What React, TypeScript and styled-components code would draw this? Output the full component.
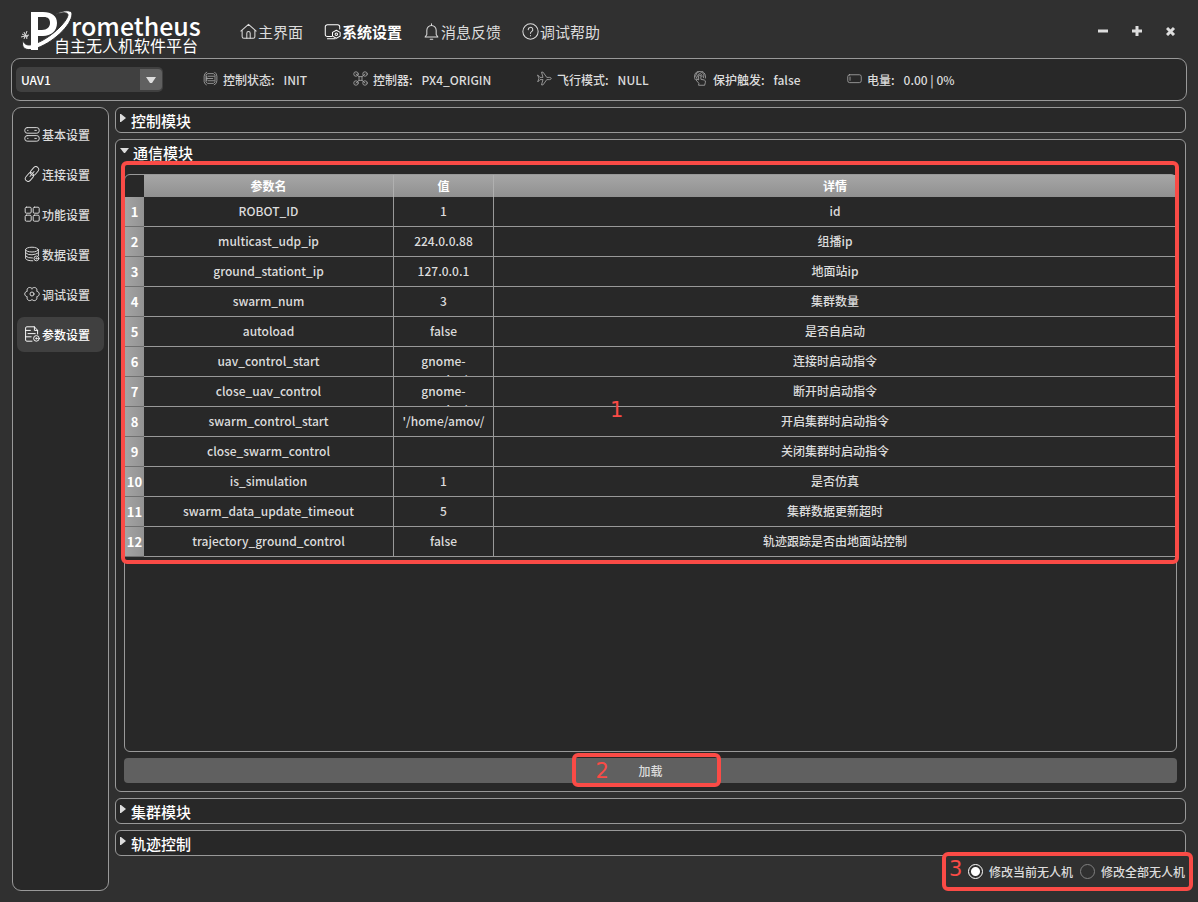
import React, { useState } from "react";
import styled, { createGlobalStyle } from "styled-components";

const line = "#999999";
const panel = "#282828";
const red = "#fa4b46";

const GlobalStyle = createGlobalStyle`
  * { box-sizing: border-box; }
  body {
    margin: 0;
    background: #303030;
    color: #dcdcdc;
    font-family: "Noto Sans CJK SC", "Noto Sans", sans-serif;
    font-size: 12px;
    font-weight: 500;
  }
  button, select, input { font: inherit; color: inherit; }
`;

const Page = styled.div`
  min-height: 100vh;
  display: flex;
  flex-direction: column;
`;

const Header = styled.header`
  height: 58px;
  display: flex;
  align-items: center;
  padding: 6px 15px 0 20px;
`;

const Logo = styled.svg`
  width: 184px;
  height: 48px;
  margin-right: 36px;
  flex: none;
`;

const Nav = styled.nav`
  display: flex;
  gap: 21px;
  flex: 1;
`;

const NavLink = styled.a<{ $active?: boolean }>`
  display: flex;
  align-items: center;
  gap: 1px;
  font-size: 15px;
  line-height: 20px;
  font-weight: ${(p) => (p.$active ? 700 : 400)};
  color: ${(p) => (p.$active ? "#ffffff" : "#dcdcdc")};
  text-decoration: none;

  svg { margin-bottom: 2px; }
`;

const Icon = styled.svg<{ $size: number }>`
  width: ${(p) => p.$size}px;
  height: ${(p) => p.$size}px;
  flex: none;
  fill: none;
  stroke: currentColor;
  stroke-linecap: round;
  stroke-linejoin: round;
`;

const WindowButtons = styled.div`
  display: flex;
  gap: 10px;
  padding-bottom: 2px;
`;

const WindowButton = styled.button`
  width: 24px;
  height: 24px;
  padding: 0;
  border: 0;
  background: none;
  display: grid;
  place-items: center;
`;

const StatusBar = styled.section`
  height: 43px;
  margin: 0 11px;
  padding: 0 4px;
  display: flex;
  align-items: center;
  background: ${panel};
  border: 1px solid ${line};
  border-radius: 9px;
`;

const SelectBox = styled.div`
  position: relative;
  width: 147px;
  height: 25px;
  margin-right: 40px;
  flex: none;
`;

const Select = styled.select`
  appearance: none;
  width: 100%;
  height: 100%;
  padding: 0 5px;
  border: 0;
  border-radius: 5px;
  background: #404040;
  color: #ffffff;
`;

const SelectArrow = styled.span`
  position: absolute;
  top: 2px;
  right: 1px;
  width: 22px;
  height: 21px;
  display: grid;
  place-items: center;
  background: #606060;
  border-radius: 0 4px 4px 0;
  pointer-events: none;
`;

const StatusItems = styled.div`
  display: flex;
`;

const StatusItem = styled.div<{ $width: number }>`
  width: ${(p) => p.$width}px;
  display: flex;
  align-items: center;
  line-height: 20px;
  white-space: nowrap;

  svg { margin-bottom: 2px; color: #b4b4b4; }
`;

const StatusLabel = styled.span`
  margin: 0 9px 0 5px;
`;

const Body = styled.div`
  flex: 1;
  display: flex;
  gap: 6px;
  padding: 6px 12px 11px;
`;

const Sidebar = styled.nav`
  width: 97px;
  flex: none;
  display: flex;
  flex-direction: column;
  gap: 5px;
  padding: 9px 4px;
  background: ${panel};
  border: 1px solid ${line};
  border-radius: 9px;
`;

const SideLink = styled.a<{ $active?: boolean }>`
  height: 35px;
  display: flex;
  align-items: center;
  gap: 2px;
  padding-left: 7px;
  border-radius: 7px;
  background: ${(p) => (p.$active ? "#404040" : "transparent")};
  color: ${(p) => (p.$active ? "#ffffff" : "#dcdcdc")};
  text-decoration: none;

  svg { margin-bottom: 2px; }
`;

const Main = styled.main`
  flex: 1;
  min-width: 0;
  display: flex;
  flex-direction: column;
  gap: 6px;
`;

const Module = styled.section<{ $open?: boolean }>`
  display: flex;
  flex-direction: column;
  flex: ${(p) => (p.$open ? "1 0 auto" : "none")};
  background: ${panel};
  border: 1px solid ${line};
  border-radius: 6px;
`;

const ModuleTitle = styled.button<{ $open?: boolean }>`
  height: 24px;
  display: flex;
  align-items: center;
  gap: ${(p) => (p.$open ? 4 : 5)}px;
  padding: 2px 0 0 4px;
  border: 0;
  background: none;
  color: #ffffff;
  font-size: 15px;
  line-height: 20px;
  text-align: left;

  svg { margin-bottom: 5px; }
`;

const ModuleBody = styled.div`
  flex: 1;
  display: flex;
  flex-direction: column;
  gap: 6px;
  padding: 10px 8px 8px;
`;

const TableFrame = styled.div`
  flex: 1;
  border: 1px solid ${line};
  border-radius: 6px;
`;

const Marked = styled.div`
  position: relative;
`;

const Mark = styled.div<{ $inset: string }>`
  position: absolute;
  inset: ${(p) => p.$inset};
  border: 4px solid ${red};
  border-radius: 6px;
  pointer-events: none;
`;

const MarkNumber = styled.span<{ $left: string; $top: string }>`
  position: absolute;
  left: ${(p) => p.$left};
  top: ${(p) => p.$top};
  color: ${red};
  font: 400 21px/24px "DejaVu Sans", sans-serif;
  pointer-events: none;
`;

const Table = styled.table`
  width: 100%;
  table-layout: fixed;
  border-collapse: separate;
  border-spacing: 0;
  text-align: center;
`;

const HeadCell = styled.th<{ $width?: number }>`
  width: ${(p) => (p.$width ? `${p.$width}px` : "auto")};
  height: 22px;
  padding: 0;
  border-right: 1px solid #b0b0b0;
  background: linear-gradient(#a6a6a6, #909090);
  color: #ffffff;
  font-weight: 700;
  line-height: 18px;

  &:last-child { border-right: 0; }
`;

const CornerCell = styled.td`
  width: 19px;
  padding: 0;
`;

const RowHead = styled.th`
  height: 30px;
  padding: 0;
  border-bottom: 1px solid #707070;
  background: linear-gradient(90deg, #a4a4a4, #929292);
  color: #ffffff;
  font-weight: 700;
  font-size: 13px;
`;

const Cell = styled.td`
  height: 30px;
  padding: 0;
  border-bottom: 1px solid ${line};
  border-right: 1px solid ${line};

  &:last-child { border-right: 0; }
`;

const CellText = styled.div`
  height: 29px;
  padding-top: 4px;
  line-height: 19px;
  overflow: hidden;
  white-space: pre-line;
`;

const LoadButton = styled.button`
  width: 100%;
  height: 25px;
  display: block;
  padding: 0;
  border: 0;
  border-radius: 4px;
  background: #606060;
`;

const Footer = styled.div`
  position: relative;
  align-self: flex-end;
  height: 19px;
  margin-bottom: 10px;
  padding-right: 1px;
  display: flex;
  align-items: center;
  gap: 7px;
`;

const RadioLabel = styled.label`
  display: flex;
  align-items: center;
  gap: 6px;
  line-height: 18px;
`;

const Radio = styled.input`
  appearance: none;
  width: 15px;
  height: 15px;
  margin: 0;
  border: 1px solid #808080;
  border-radius: 50%;

  &:checked {
    border-color: #ffffff;
    background: radial-gradient(circle, #ffffff 4px, transparent 5px);
  }
`;

const icons: Record<string, React.ReactNode> = {
  home: <><path d="M1 9.500L10 1.500l9 8M2.500 8.500V16a2 2 0 0 0 2 2h11a2 2 0 0 0 2-2V8.500" /><path d="M8 18v-6a2 2 0 0 1 4 0v6" /></>,
  system: <><path d="M9 16H4a2.500 2.500 0 0 1-2.500-2.500v-9A2.500 2.500 0 0 1 4 2h12a2.500 2.500 0 0 1 2.500 2.500V7M4 18.500h9" /><path d="M14.500 8.500l4.500 2.500v4.500L14.500 18 10 15.500V11z" /><circle cx="14.500" cy="13.200" r="1.500" /></>,
  bell: <><path d="M2.500 16.500h15l-2-3V8.500a5.500 5.500 0 0 0-11 0v5zM10 3V1M8.500 19h3" /></>,
  help: <><circle cx="10" cy="10" r="9" /><path d="M7.300 7.800a2.700 2.700 0 1 1 4 2.400q-1.300.8-1.300 2M10 14.800v.3" /></>,
  basic: <><rect x="1" y="2" width="18" height="7" rx="3" /><rect x="1" y="12" width="18" height="7" rx="3" /><path d="M4.500 5.500h.5M13.500 5.500h2M4.500 15.500h.5M13.500 15.500h2" /></>,
  link: <g transform="rotate(-50 10 10)"><rect x="-1" y="6.500" width="12" height="7" rx="3.500" /><rect x="9" y="6.500" width="12" height="7" rx="3.500" /><path d="M6 10h8" /></g>,
  grid: <><rect x="1.500" y="1.500" width="7.500" height="7.500" rx="1.500" /><rect x="11.500" y="1.500" width="7.500" height="7.500" rx="1.500" /><rect x="1.500" y="11.500" width="7.500" height="7.500" rx="1.500" /><rect x="11.500" y="11.500" width="7.500" height="7.500" rx="1.500" /></>,
  data: <><ellipse cx="10" cy="4.500" rx="8" ry="3" /><path d="M2 4.500v11q1 3 9 3M18 4.500V12M2 8.500q3 3 8 2.500t8-2.500M2 12.500q3 3 8.500 2.500" /><circle cx="15.500" cy="15.500" r="3" /><circle cx="15.500" cy="15.500" r=".8" /></>,
  gear: <><path d="M10 3.200C12.700-.1 17.400 2.600 15.900 6.600 20.100 7.300 20.100 12.700 15.900 13.400 17.400 17.400 12.700 20.100 10 16.800 7.300 20.100 2.600 17.400 4.100 13.400-.1 12.700-.1 7.300 4.100 6.600 2.600 2.600 7.300-.1 10 3.200z" /><circle cx="10" cy="10" r="2.500" /></>,
  params: <><path d="M10 19H3.500A1.500 1.500 0 0 1 2 17.500v-15A1.500 1.500 0 0 1 3.500 1H13l4 4.500V10M13 1v4.500h4M2 5.500h6M5 9.500h9M2 13.500h7" /><circle cx="15.500" cy="15.500" r="3.500" /><circle cx="15.500" cy="15.500" r=".8" /></>,
  control: <><path d="M5 1.500Q1.500 3 1.500 7v7q0 3 3 4.500M15.500 1.500q3 2 3 5.500v6q0 4-3.500 5.500M7 3.500h7l2 2v9l-2 2H6l-2-2v-9zM7 7h8M5 10h8M7 13h8M5 7v6" /></>,
  drone: <><circle cx="4" cy="4" r="3" /><circle cx="16" cy="4" r="3" /><circle cx="4" cy="16" r="3" /><circle cx="16" cy="16" r="3" /><path d="M4 4l4 3.500h4L16 4M4 16l4-3.500h4l4 3.500M8 7.500v5M12 7.500v5" /></>,
  plane: <><path d="M1 5.500l3 3h4L6 1.500h2l5 7h4q2 .5 2 1.500t-2 1.500h-4l-5 7H6l2-7H4l-3 3L2.500 10z" /></>,
  touch: <><path d="M7.500 16l-3.500-4q1-2 3.500 0V7a1.500 1.500 0 0 1 3 0v4l4.500 1q2 .5 1.500 3l-1 4H8z" /><path d="M5 10a5.500 5.500 0 1 1 9-1M3 11.500a7.500 7.500 0 1 1 13.500-2M6.500 8a3 3 0 1 1 5.500-.5" /></>,
  battery: <><rect x="1" y="5" width="18" height="10.500" rx="2.500" /><path d="M4 8v4.500" /></>,
};

function Glyph({ name, size, stroke = 1.2 }: { name: string; size: number; stroke?: number }) {
  return (
    <Icon $size={size} viewBox="0 0 20 20" strokeWidth={stroke} aria-hidden="true">
      {icons[name]}
    </Icon>
  );
}

const LogoName = styled.text`
  fill: #ffffff;
  font-size: 25px;
  font-weight: 500;
`;

const LogoTagline = styled.text`
  fill: #ffffff;
  font-size: 16px;
  font-weight: 400;
`;

function Brand() {
  return (
    <Logo viewBox="0 0 184 48" role="img" aria-label="Prometheus 自主无人机软件平台">
      <path fill="#fff" fillRule="evenodd" d="M11 4h12c9 0 14 4 14 11 0 8-6 13-14 13h-5v14h-7zM18 9v13h4c5 0 8-3 8-7s-2-6-6-6z" />
      <path fill="#fff" stroke="#303030" strokeWidth="1" d="M34 7C42 2 52 1 52 6 52 17 32 36 14 41 5 43 1 40 3 32 4 37 8 38 14 36 30 31 47 14 48 7 48 4 42 4 34 7z" />
      <path fill="#fff" d="M11 32h7v10h-7z" />
      <path stroke="#ddd" strokeWidth="1" d="M1 29l8-2M4 24l3 7M7 23l-3 8M2 26l6 3" />
      <LogoName x="51" y="28">rometheus</LogoName>
      <LogoTagline x="34" y="44">自主无人机软件平台</LogoTagline>
    </Logo>
  );
}

function Triangle({ open }: { open?: boolean }) {
  return open ? (
    <svg width="9" height="6" aria-hidden="true"><path d="M0 0h9L5 5H4z" fill="#ddd" /></svg>
  ) : (
    <svg width="6" height="9" aria-hidden="true"><path d="M0 0h1l5 4-5 4H0z" fill="#ddd" /></svg>
  );
}

const nav = [
  ["home", "主界面"],
  ["system", "系统设置"],
  ["bell", "消息反馈"],
  ["help", "调试帮助"],
];

const statuses: [string, string, string, number][] = [
  ["control", "控制状态:", "INIT", 150],
  ["drone", "控制器:", "PX4_ORIGIN", 184],
  ["plane", "飞行模式:", "NULL", 156],
  ["touch", "保护触发:", "false", 154],
  ["battery", "电量:", "0.00 | 0%", 120],
];

const side = [
  ["basic", "基本设置"],
  ["link", "连接设置"],
  ["grid", "功能设置"],
  ["data", "数据设置"],
  ["gear", "调试设置"],
  ["params", "参数设置"],
];

const rows = [
  ["ROBOT_ID", "1", "id"],
  ["multicast_udp_ip", "224.0.0.88", "组播ip"],
  ["ground_stationt_ip", "127.0.0.1", "地面站ip"],
  ["swarm_num", "3", "集群数量"],
  ["autoload", "false", "是否自启动"],
  ["uav_control_start", "gnome-\nterminal", "连接时启动指令"],
  ["close_uav_control", "gnome-\nterminal", "断开时启动指令"],
  ["swarm_control_start", "'/home/amov/", "开启集群时启动指令"],
  ["close_swarm_control", "", "关闭集群时启动指令"],
  ["is_simulation", "1", "是否仿真"],
  ["swarm_data_update_timeout", "5", "集群数据更新超时"],
  ["trajectory_ground_control", "false", "轨迹跟踪是否由地面站控制"],
];

function ClosedModule({ title }: { title: string }) {
  return (
    <Module>
      <ModuleTitle aria-expanded={false}><Triangle />{title}</ModuleTitle>
    </Module>
  );
}

export default function App() {
  const [scope, setScope] = useState("current");
  return (
    <>
      <GlobalStyle />
      <Page>
        <Header>
          <Brand />
          <Nav>
            {nav.map(([icon, label], i) => (
              <NavLink href="#" key={label} $active={i === 1}>
                <Glyph name={icon} size={17} />
                {label}
              </NavLink>
            ))}
          </Nav>
          <WindowButtons>
            <WindowButton aria-label="最小化"><svg width="10" height="10"><path d="M0 5h10" stroke="#ddd" strokeWidth="3" /></svg></WindowButton>
            <WindowButton aria-label="最大化"><svg width="10" height="10"><path d="M0 5h10M5 0v10" stroke="#ddd" strokeWidth="3" /></svg></WindowButton>
            <WindowButton aria-label="关闭"><svg width="10" height="10"><path d="M1 2l7 7M8 2L1 9" stroke="#ddd" strokeWidth="3" /></svg></WindowButton>
          </WindowButtons>
        </Header>
        <StatusBar>
          <SelectBox>
            <Select aria-label="无人机"><option>UAV1</option></Select>
            <SelectArrow><svg width="10" height="6"><path d="M0 0h10L6 6H4z" fill="#ddd" /></svg></SelectArrow>
          </SelectBox>
          <StatusItems>
            {statuses.map(([icon, label, value, width]) => (
              <StatusItem key={label} $width={width}>
                <Glyph name={icon} size={15} stroke={1} />
                <StatusLabel>{label}</StatusLabel>
                {value}
              </StatusItem>
            ))}
          </StatusItems>
        </StatusBar>
        <Body>
          <Sidebar>
            {side.map(([icon, label], i) => (
              <SideLink href="#" key={label} $active={i === 5}>
                <Glyph name={icon} size={16} />
                {label}
              </SideLink>
            ))}
          </Sidebar>
          <Main>
            <ClosedModule title="控制模块" />
            <Module $open>
              <ModuleTitle $open aria-expanded><Triangle open />通信模块</ModuleTitle>
              <ModuleBody>
                <TableFrame>
                  <Marked>
                    <Table>
                      <thead>
                        <tr>
                          <CornerCell />
                          <HeadCell $width={250}>参数名</HeadCell>
                          <HeadCell $width={100}>值</HeadCell>
                          <HeadCell>详情</HeadCell>
                        </tr>
                      </thead>
                      <tbody>
                        {rows.map((row, i) => (
                          <tr key={row[0]}>
                            <RowHead scope="row">{i + 1}</RowHead>
                            {row.map((text, j) => (
                              <Cell key={j}><CellText>{text}</CellText></Cell>
                            ))}
                          </tr>
                        ))}
                      </tbody>
                    </Table>
                    <Mark $inset="-14px -3px -7px -4px" />
                    <MarkNumber $left="485px" $top="223px">1</MarkNumber>
                  </Marked>
                </TableFrame>
                <Marked>
                  <LoadButton>加载</LoadButton>
                  <Mark $inset="-5px calc(50% - 70px) -4px calc(50% - 79px)" />
                  <MarkNumber $left="calc(50% - 55px)" $top="1px">2</MarkNumber>
                </Marked>
              </ModuleBody>
            </Module>
            <ClosedModule title="集群模块" />
            <ClosedModule title="轨迹控制" />
            <Footer>
              <RadioLabel>
                <Radio type="radio" name="scope" checked={scope === "current"} onChange={() => setScope("current")} />
                修改当前无人机
              </RadioLabel>
              <RadioLabel>
                <Radio type="radio" name="scope" checked={scope === "all"} onChange={() => setScope("all")} />
                修改全部无人机
              </RadioLabel>
              <Mark $inset="-10px -7px -10px -26px" />
              <MarkNumber $left="-19px" $top="-5px">3</MarkNumber>
            </Footer>
          </Main>
        </Body>
      </Page>
    </>
  );
}
